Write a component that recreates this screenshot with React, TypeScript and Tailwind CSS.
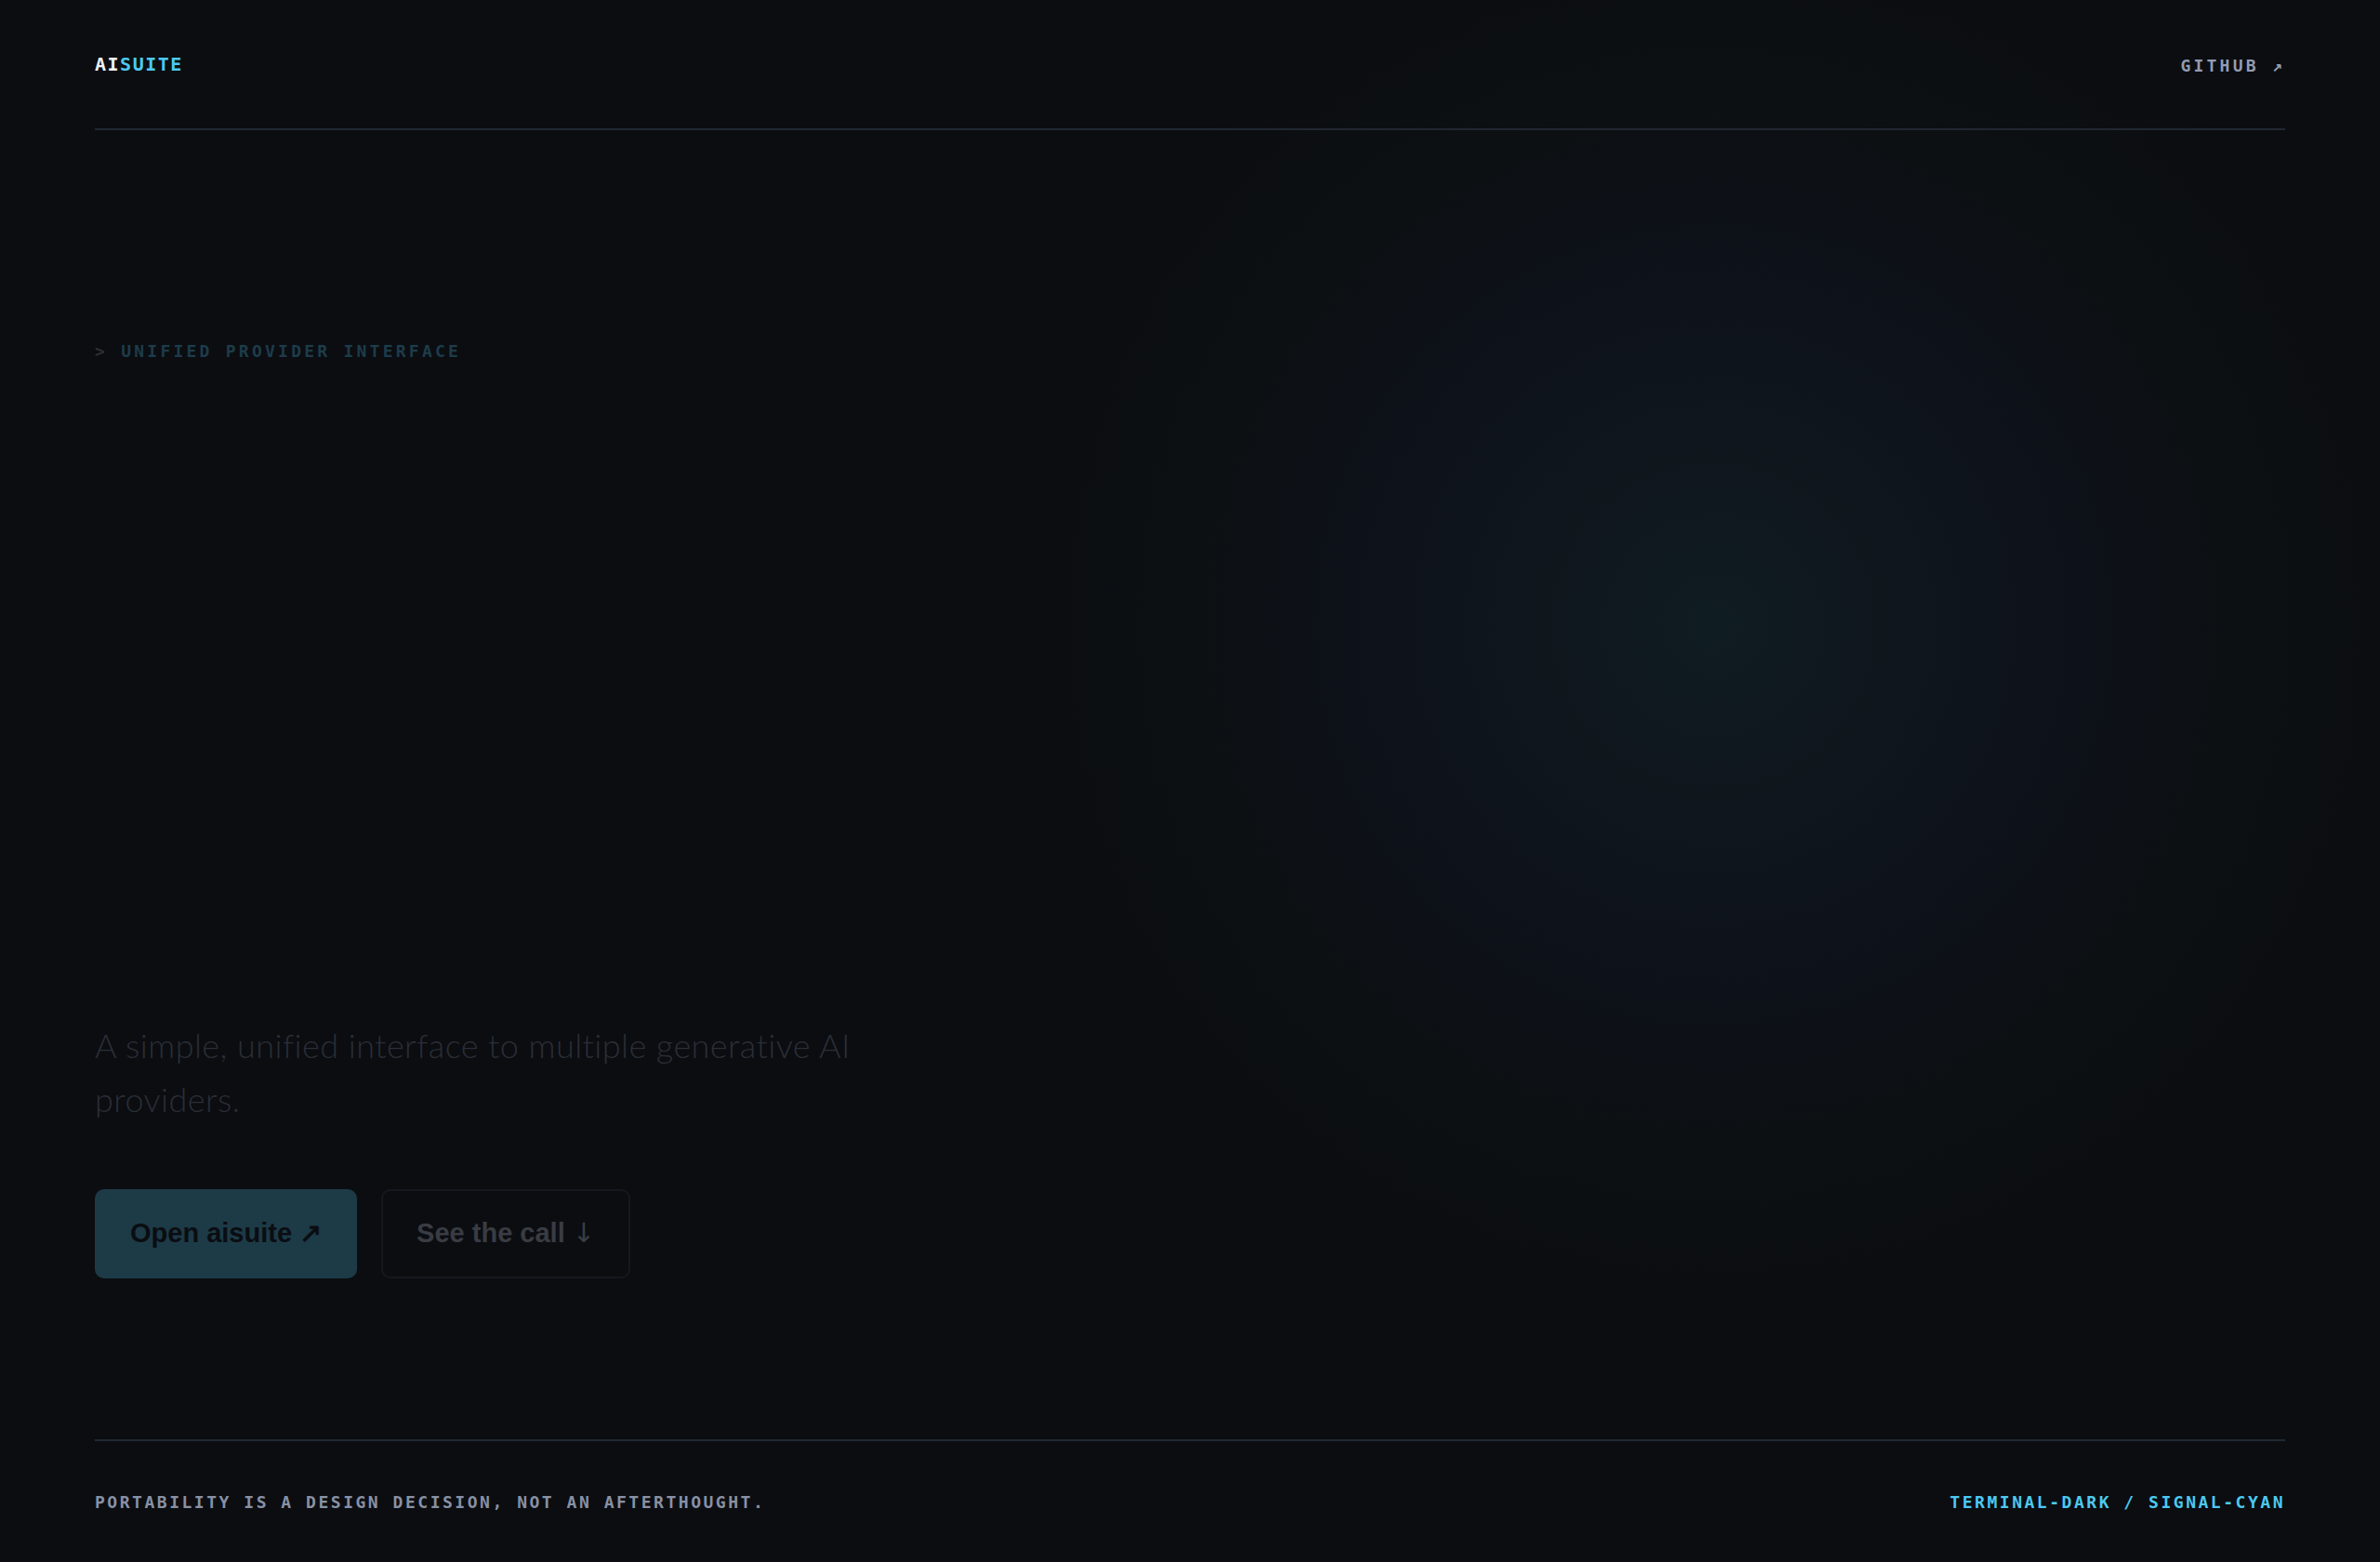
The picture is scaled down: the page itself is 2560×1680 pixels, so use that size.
const mono = "font-['DejaVu_Sans_Mono','Liberation_Mono',monospace]"

export default function App() {
  return (
    <div className="flex h-[1680px] w-full flex-col bg-[#0b0d11] bg-[radial-gradient(circle_at_72%_40%,#0f1c21_0px,#0f171d_180px,#0e131b_330px,#0d1118_420px,#0c1013_560px,#0b0d11_760px)] px-[102px]">
      {/* Header */}
      <header className="flex h-[140px] shrink-0 items-center justify-between border-b-2 border-[#212831]">
        <a className={`${mono} text-[20px] font-bold leading-7 tracking-[0.075em]`}>
          <span className="text-[#eef2f6]">AI</span>
          <span className="text-[#4cc9f0]">SUITE</span>
        </a>
        <a className={`${mono} mt-1 text-[18px] font-bold leading-7 tracking-[0.18em] text-[#939cb0]`}>
          GITHUB ↗
        </a>
      </header>

      {/* Hero */}
      <main className="flex flex-1 flex-col pt-[226px]">
        <p className={`${mono} text-[18px] font-bold leading-6 tracking-[0.18em]`}>
          <span className="text-[#2c3036]">&gt; </span>
          <span className="text-[#1d3c4a]">UNIFIED PROVIDER INTERFACE</span>
        </p>

        <p className="mt-[706px] max-w-[880px] font-['Lato','Noto_Sans',sans-serif] text-[36px] font-light leading-[1.6] tracking-[0.012em] text-[#2a2e36]">
          A simple, unified interface to multiple generative AI providers.
        </p>

        <div className="mt-[68px] flex gap-[26px]">
          <button className="h-[96px] rounded-[10px] border-2 border-[#1d3a47] bg-[#1d3a47] px-9 font-['Liberation_Sans',Arial,sans-serif] text-[29px] font-bold text-[#0a0d11]">
            Open aisuite ↗
          </button>
          <button className="h-[96px] rounded-[10px] border-2 border-[#15181e] bg-transparent px-9 font-['Liberation_Sans',Arial,sans-serif] text-[29px] font-bold text-[#393c43]">
            See the call <span className="font-['DejaVu_Sans',sans-serif] font-normal">↓</span>
          </button>
        </div>
      </main>

      {/* Footer */}
      <footer className="flex h-[132px] shrink-0 items-center justify-between border-t-2 border-[#212831]">
        <p className={`${mono} text-[18px] font-bold tracking-[0.14em] text-[#8891a5]`}>
          PORTABILITY IS A DESIGN DECISION, NOT AN AFTERTHOUGHT.
        </p>
        <p className={`${mono} text-[18px] font-bold tracking-[0.14em] text-[#4cc9f0]`}>
          TERMINAL-DARK / SIGNAL-CYAN
        </p>
      </footer>
    </div>
  )
}
